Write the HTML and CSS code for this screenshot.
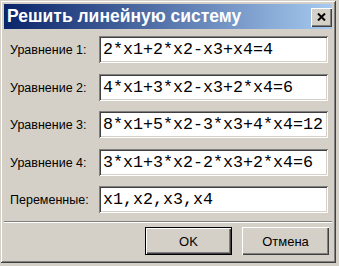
FILE: index.html
```html
<!DOCTYPE html>
<html lang="ru">
  <head>
    <meta charset="UTF-8" />
    <title>Решить линейную систему</title>
    <link rel="stylesheet" href="styles.css">
  </head>
  <body>
    <div class="window">
      <div class="title-bar">
        <span class="title-text">Решить линейную систему</span>
        <button class="close-button" aria-label="Закрыть">
          <svg width="9" height="8" viewBox="0 0 9 8">
            <path d="M1 0.5 L8 7.5 M8 0.5 L1 7.5" stroke="#000" stroke-width="2" fill="none" />
          </svg>
        </button>
      </div>

      <div class="dialog-body">
        <div class="form-grid">
          <label class="field-label">Уравнение 1:</label>
          <div class="field-input">2*x1+2*x2-x3+x4=4</div>

          <label class="field-label">Уравнение 2:</label>
          <div class="field-input">4*x1+3*x2-x3+2*x4=6</div>

          <label class="field-label">Уравнение 3:</label>
          <div class="field-input">8*x1+5*x2-3*x3+4*x4=12</div>

          <label class="field-label">Уравнение 4:</label>
          <div class="field-input">3*x1+3*x2-2*x3+2*x4=6</div>

          <label class="field-label">Переменные:</label>
          <div class="field-input">x1,x2,x3,x4</div>
        </div>

        <div class="separator"></div>

        <div class="button-row">
          <button class="button default-button">OK</button>
          <button class="button">Отмена</button>
        </div>
      </div>
    </div>
  </body>
</html>
```

FILE: styles.css
```css
:root {
  --face: #d4d0c8;
  --shadow: #808080;
  --dark-shadow: #404040;
  --highlight: #ffffff;
  --ui-font: "Liberation Sans", Arial, sans-serif;
  --mono-font: "Liberation Mono", "Courier New", monospace;
}

* {
  margin: 0;
  padding: 0;
  box-sizing: border-box;
}

body {
  background-color: var(--face);
  font-family: var(--ui-font);
  color: #000;
}

.window {
  width: 336px;
  height: 263px;
  padding: 4px;
  background-color: var(--face);
  box-shadow: inset 1px 1px 0 var(--face), inset -1px -1px 0 var(--dark-shadow),
    inset 2px 2px 0 var(--highlight), inset -2px -2px 0 var(--shadow);
  display: flex;
  flex-direction: column;
}

.title-bar {
  height: 25px;
  padding: 0 0 0 3px;
  background: linear-gradient(to right, #0a246a, #a6caf0);
  display: flex;
  align-items: center;
  justify-content: space-between;
}

.title-text {
  color: white;
  font-size: 17.5px;
  font-weight: bold;
  white-space: nowrap;
}

.close-button {
  width: 21px;
  height: 19px;
  margin-top: 1px;
  background-color: var(--face);
  border: none;
  box-shadow: inset 1px 1px 0 var(--highlight), inset -1px -1px 0 var(--dark-shadow),
    inset -2px -2px 0 var(--shadow);
  display: flex;
  align-items: center;
  justify-content: center;
  padding-bottom: 1px;
}

.dialog-body {
  flex: 1;
  padding: 7px 0 0 0;
  display: flex;
  flex-direction: column;
}

.form-grid {
  display: grid;
  grid-template-columns: 89px 229px;
  grid-auto-rows: 27px;
  row-gap: 10.5px;
  padding-left: 6px;
  align-items: center;
}

.field-label {
  font-size: 12.5px;
  padding-top: 1px;
}

.field-input {
  height: 27px;
  padding: 0 0 0 4px;
  background-color: white;
  font-family: var(--mono-font);
  font-size: 16.67px;
  line-height: 27px;
  white-space: nowrap;
  box-shadow: inset 1px 1px 0 var(--shadow), inset -1px -1px 0 var(--highlight),
    inset 2px 2px 0 var(--dark-shadow), inset -2px -2px 0 var(--face);
}

.separator {
  height: 2px;
  margin-top: 8px;
  border-top: 1px solid var(--shadow);
  border-bottom: 1px solid var(--highlight);
}

.button-row {
  display: flex;
  justify-content: flex-end;
  gap: 10px;
  padding: 4px 3px 0 0;
}

.button {
  width: 87px;
  height: 28px;
  background-color: var(--face);
  border: none;
  font-family: var(--ui-font);
  font-size: 13px;
  color: #000;
  box-shadow: inset 1px 1px 0 var(--highlight), inset -1px -1px 0 var(--dark-shadow),
    inset -2px -2px 0 var(--shadow);
}

.default-button {
  box-shadow: inset 0 0 0 1px #000, inset 2px 2px 0 var(--highlight),
    inset -2px -2px 0 var(--dark-shadow), inset -3px -3px 0 var(--shadow);
}
```
